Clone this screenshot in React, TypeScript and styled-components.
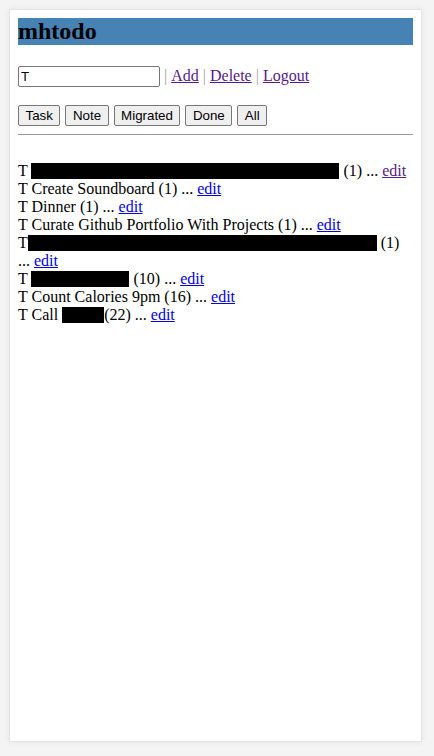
import React from "react";
import styled, { createGlobalStyle } from "styled-components";

const Global = createGlobalStyle`
  html, body { margin: 0; padding: 0; background: #f4f4f4; }
  body { padding: 9px; font-family: "Liberation Serif", "Times New Roman", serif; font-size: 16px; color: #000; }
`;

const Card = styled.div`
  box-sizing: border-box;
  width: 413px;
  height: 733px;
  background: #fff;
  border: 1px solid #e4e4e4;
  box-shadow: 0 0 6px rgba(0, 0, 0, 0.07);
  padding: 8px;
`;

const Title = styled.h2`
  margin: 0;
  background: #4682b4;
  font-size: 24px;
  line-height: 27px;
  font-weight: bold;
  color: #000;
`;

const Toolbar = styled.div`
  margin-top: 20px;
  display: flex;
  align-items: center;
  height: 22px;
  line-height: 18px;
`;

const SearchInput = styled.input`
  box-sizing: border-box;
  width: 142px;
  height: 21px;
  margin: 0;
  padding: 1px 2px;
  border: 1px solid #767676;
  border-radius: 2px;
  font-family: "Liberation Sans", Arial, sans-serif;
  font-size: 13.33px;
  color: #000;
`;

const Sep = styled.span`
  color: #a0a0a0;
  margin: 0 4px;
`;

const NavLink = styled.a<{ $visited?: boolean }>`
  color: ${(p) => (p.$visited ? "#551a8b" : "#0000ee")};
  text-decoration: underline;
  cursor: pointer;
`;

const FilterBar = styled.div`
  margin-top: 18px;
  display: flex;
  gap: 5px;
`;

const FilterButton = styled.button`
  box-sizing: border-box;
  height: 21px;
  margin: 0;
  padding: 1px 6.5px;
  background: #efefef;
  border: 1px solid #767676;
  border-radius: 2px;
  font-family: "Liberation Sans", Arial, sans-serif;
  font-size: 13.33px;
  color: #000;
`;

const Rule = styled.hr`
  margin: 8px 0 0;
  border: 0;
  border-top: 1px solid #9a9a9a;
  height: 0;
`;

const List = styled.div`
  margin-top: 27px;
  line-height: 18px;
`;

const Item = styled.div``;

const Redacted = styled.span<{ $w: number }>`
  display: inline-block;
  width: ${(p) => p.$w}px;
  height: 16px;
  background: #000;
  vertical-align: -3px;
`;

type Row = { before: string; w?: number; after: string; visited?: boolean };

const rows: Row[] = [
  { before: "T ", w: 308, after: " (1) ... ", visited: true },
  { before: "T Create Soundboard (1) ... ", after: "" },
  { before: "T Dinner (1) ... ", after: "" },
  { before: "T Curate Github Portfolio With Projects (1) ... ", after: "" },
  { before: "T", w: 349, after: " (1) ... " },
  { before: "T ", w: 98, after: " (10) ... " },
  { before: "T Count Calories 9pm (16) ... ", after: "" },
  { before: "T Call ", w: 42, after: "(22) ... " },
];

export default function App() {
  return (
    <>
      <Global />
      <Card>
        <Title>mhtodo</Title>
        <Toolbar>
          <SearchInput defaultValue="T" />
          <Sep>|</Sep>
          <NavLink $visited>Add</NavLink>
          <Sep>|</Sep>
          <NavLink $visited>Delete</NavLink>
          <Sep>|</Sep>
          <NavLink $visited>Logout</NavLink>
        </Toolbar>
        <FilterBar>
          <FilterButton>Task</FilterButton>
          <FilterButton>Note</FilterButton>
          <FilterButton>Migrated</FilterButton>
          <FilterButton>Done</FilterButton>
          <FilterButton>All</FilterButton>
        </FilterBar>
        <Rule />
        <List>
          {rows.map((r, i) => (
            <Item key={i}>
              {r.before}
              {r.w ? <Redacted $w={r.w} /> : null}
              {r.after}
              <NavLink $visited={r.visited}>edit</NavLink>
            </Item>
          ))}
        </List>
      </Card>
    </>
  );
}
